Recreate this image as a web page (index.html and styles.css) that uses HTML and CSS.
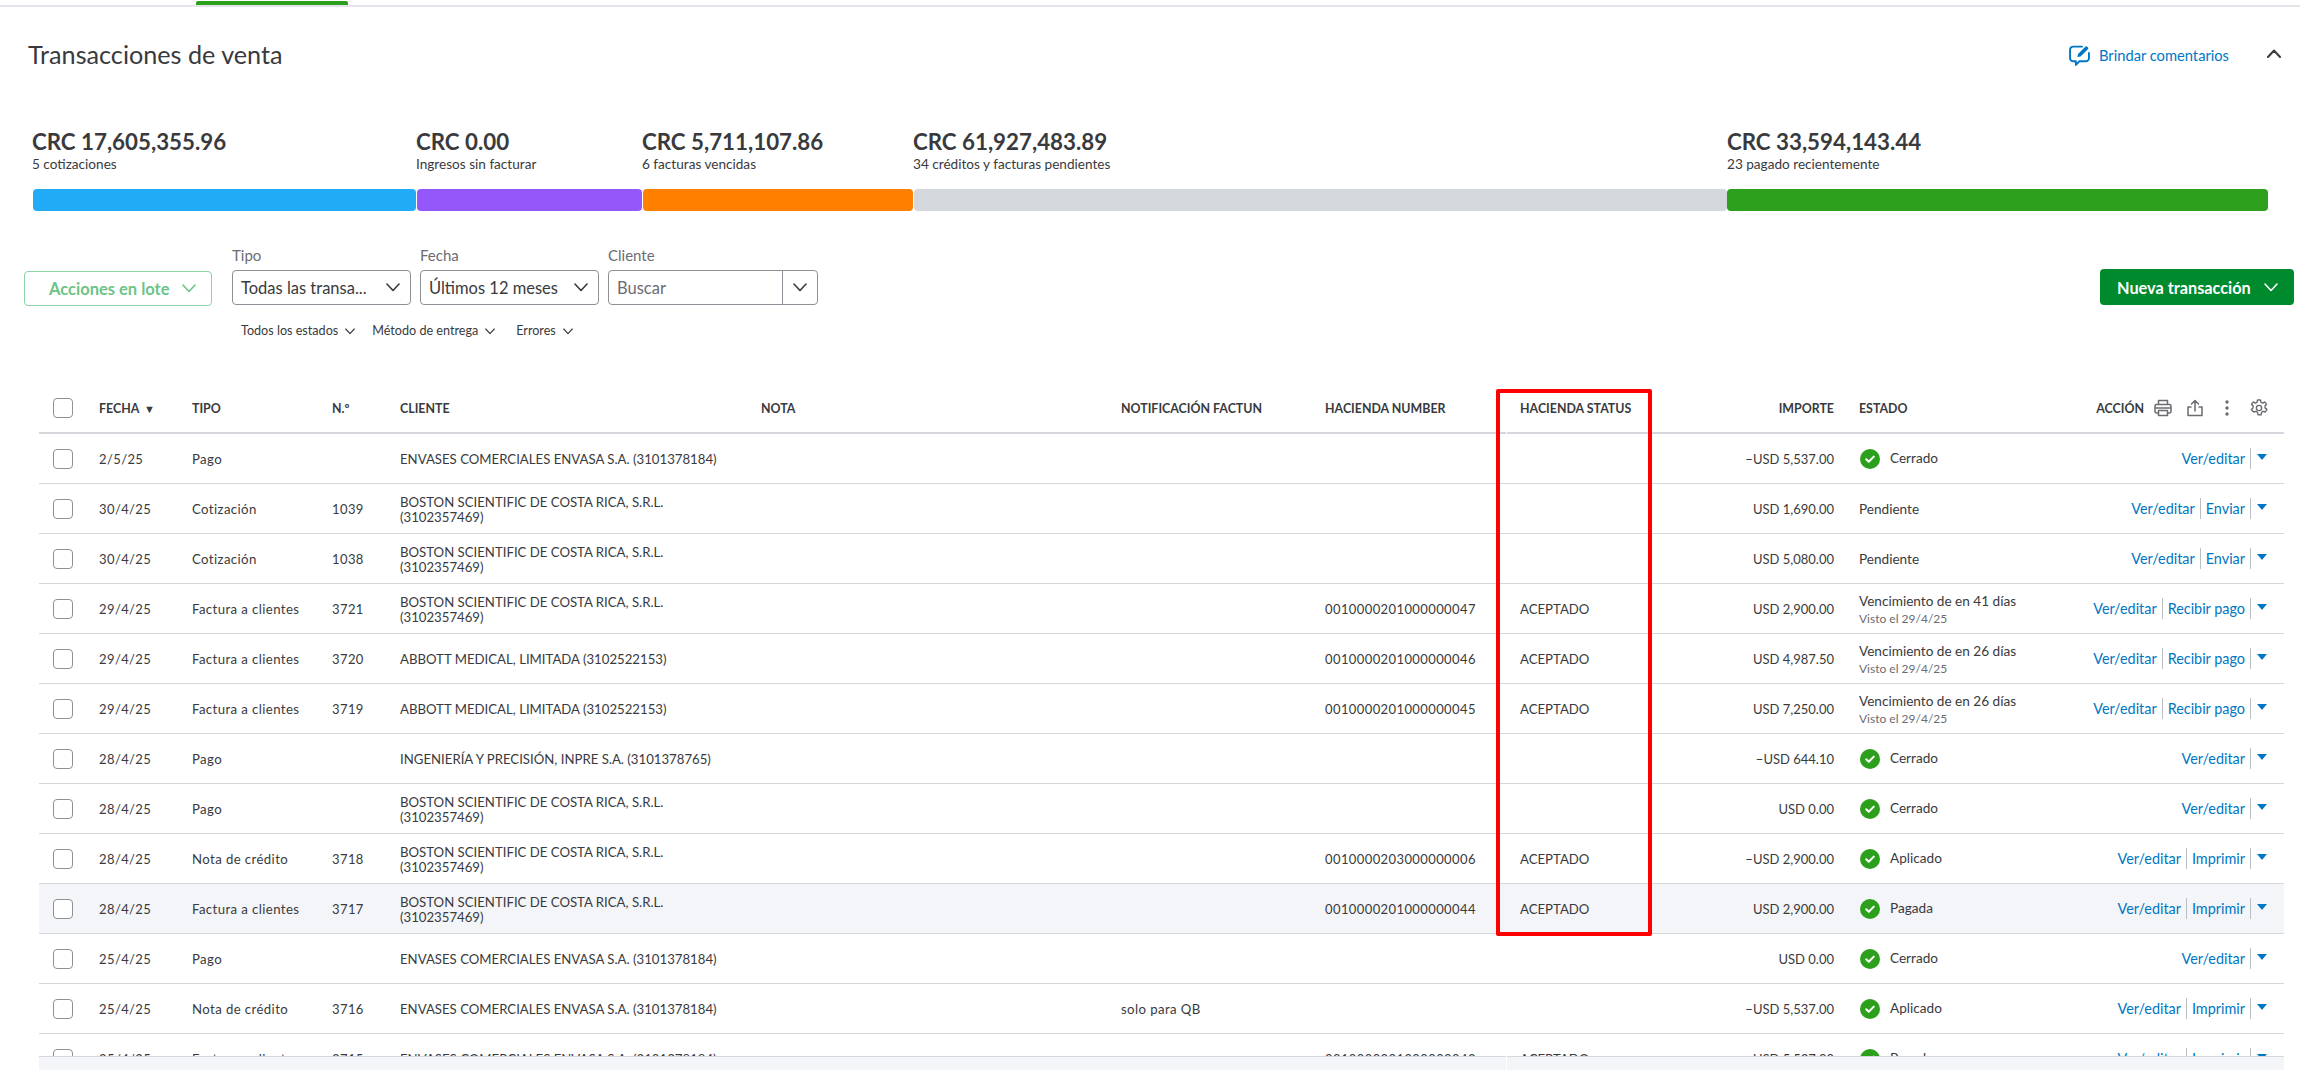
FILE: index.html
```html
<!DOCTYPE html>
<html lang="es">
<head>
<meta charset="utf-8">
<title>Transacciones de venta</title>
<link rel="stylesheet" href="styles.css">
</head>
<body>
<svg class="sprite" aria-hidden="true">
  <symbol id="ok" viewBox="0 0 20 20"><circle cx="10" cy="10" r="10" fill="#2ca01c"/><path d="M6.2 10.3l2.6 2.5 5-5.2" fill="none" stroke="#fff" stroke-width="2" stroke-linecap="round" stroke-linejoin="round"/></symbol>
  <symbol id="tri" viewBox="0 0 10 6"><path d="M0 0h10L5 6z" fill="#0077c5"/></symbol>
  <symbol id="chev" viewBox="0 0 14 9"><path d="M1 1l6 6.5L13 1" fill="none" stroke="currentColor" stroke-width="1.6" stroke-linecap="round" stroke-linejoin="round"/></symbol>
</svg>

<div class="topbar"><div class="tab"></div></div>

<header class="head">
  <h1 class="title">Transacciones de venta</h1>
  <div class="feedback">
    <svg class="fb-icon" viewBox="0 0 20 20"><path d="M12.5 1.5H4A3 3 0 0 0 1 4.5v8A3 3 0 0 0 4 15.500h2.500v3.500l3.500-3.500h6a3 3 0 0 0 3-3V7.500" fill="none" stroke="#0077c5" stroke-width="1.800" stroke-linejoin="round" stroke-linecap="round"/><path d="M8 11.500l.6-3L15.500 1.600a1.300 1.300 0 0 1 1.900 0l.6.600a1.300 1.300 0 0 1 0 1.900L11 11z" fill="#0077c5"/></svg>
    <span class="fb-text">Brindar comentarios</span>
    <svg class="collapse" viewBox="0 0 14 9"><path d="M1 8l6-6.500L13 8" fill="none" stroke="#393a3d" stroke-width="2" stroke-linecap="round" stroke-linejoin="round"/></svg>
  </div>
</header>

<section class="summary">
  <div class="seg"><div class="amount">CRC 17,605,355.96</div><div class="sub">5 cotizaciones</div><div class="bar blue"></div></div>
  <div class="seg"><div class="amount">CRC 0.00</div><div class="sub">Ingresos sin facturar</div><div class="bar purple"></div></div>
  <div class="seg"><div class="amount">CRC 5,711,107.86</div><div class="sub">6 facturas vencidas</div><div class="bar orange"></div></div>
  <div class="seg"><div class="amount">CRC 61,927,483.89</div><div class="sub">34 créditos y facturas pendientes</div><div class="bar grey"></div></div>
  <div class="seg"><div class="amount">CRC 33,594,143.44</div><div class="sub">23 pagado recientemente</div><div class="bar green"></div></div>
</section>

<section class="toolbar">
  <button class="batch">Acciones en lote <svg class="ch"><use href="#chev"/></svg></button>
  <div class="field">
    <label class="lbl">Tipo</label>
    <div class="select"><span>Todas las transa...</span><svg class="ch"><use href="#chev"/></svg></div>
  </div>
  <div class="field">
    <label class="lbl">Fecha</label>
    <div class="select"><span>Últimos 12 meses</span><svg class="ch"><use href="#chev"/></svg></div>
  </div>
  <div class="field">
    <label class="lbl">Cliente</label>
    <div class="select combo"><span class="ph">Buscar</span><span class="combo-btn"><svg class="ch"><use href="#chev"/></svg></span></div>
  </div>
  <button class="new">Nueva transacción <svg class="ch"><use href="#chev"/></svg></button>
</section>

<section class="filters">
  <span class="filter">Todos los estados <svg class="ch-s"><use href="#chev"/></svg></span>
  <span class="filter">Método de entrega <svg class="ch-s"><use href="#chev"/></svg></span>
  <span class="filter">Errores <svg class="ch-s"><use href="#chev"/></svg></span>
</section>

<section class="table">
  <div class="row th">
    <div class="c-check"><span class="cb"></span></div>
    <div>FECHA <span class="sort">▼</span></div>
    <div>TIPO</div>
    <div>N.º</div>
    <div>CLIENTE</div>
    <div>NOTA</div>
    <div>NOTIFICACIÓN FACTUN</div>
    <div>HACIENDA NUMBER</div>
    <div>HACIENDA STATUS</div>
    <div class="right">IMPORTE</div>
    <div class="c-status">ESTADO</div>
    <div class="c-act th-act">
      <span class="act-label">ACCIÓN</span>
      <svg class="th-i" viewBox="0 0 18 18"><path d="M4.500 5.500V1.500h9v4M4.500 14H2.500A1.500 1.500 0 0 1 1 12.500v-5.500A1.500 1.500 0 0 1 2.500 5.500h13A1.500 1.500 0 0 1 17 7v5.500a1.500 1.500 0 0 1-1.500 1.500h-2M4.500 11.500h9v5h-9zM1.500 9h15" fill="none" stroke="#6b6c72" stroke-width="1.500" stroke-linejoin="round"/></svg>
      <svg class="th-i" viewBox="0 0 18 18"><path d="M9 12V1.500M5.500 5L9 1.500 12.500 5M5 8H2v8.500h14V8h-3" fill="none" stroke="#6b6c72" stroke-width="1.500" stroke-linecap="round" stroke-linejoin="round"/></svg>
      <svg class="th-i" viewBox="0 0 18 18"><circle cx="9" cy="3" r="1.700" fill="#6b6c72"/><circle cx="9" cy="9" r="1.700" fill="#6b6c72"/><circle cx="9" cy="15" r="1.700" fill="#6b6c72"/></svg>
      <svg class="th-i" viewBox="0 0 18 18"><path d="M7.500 1h3l.5 2.300 1.700.8 2.100-1.200 1.800 2.400-1.600 1.700.1 1.900 1.800 1.500-1.500 2.600-2.300-.7-1.500 1.100-.5 2.400h-3l-.6-2.400-1.500-1.100-2.300.7L1.300 10.500 3 9 3.100 7 1.500 5.300l1.800-2.400 2.100 1.200 1.600-.8z" fill="none" stroke="#6b6c72" stroke-width="1.400" stroke-linejoin="round"/><circle cx="9" cy="9" r="2.600" fill="none" stroke="#6b6c72" stroke-width="1.400"/></svg>
    </div>
  </div>

  <div class="row">
    <div class="c-check"><span class="cb"></span></div><div class="num">2/5/25</div><div class="kind">Pago</div><div class="num"></div><div>ENVASES COMERCIALES ENVASA S.A. (3101378184)</div><div></div><div></div><div class="num"></div><div></div>
    <div class="right">−USD 5,537.00</div>
    <div class="c-status st"><svg class="ok"><use href="#ok"/></svg>Cerrado</div>
    <div class="c-act"><a class="lnk">Ver/editar</a><span class="sep"></span><svg class="tri"><use href="#tri"/></svg></div>
  </div>
  <div class="row">
    <div class="c-check"><span class="cb"></span></div><div class="num">30/4/25</div><div class="kind">Cotización</div><div class="num">1039</div><div class="client">BOSTON SCIENTIFIC DE COSTA RICA, S.R.L. (3102357469)</div><div></div><div></div><div class="num"></div><div></div>
    <div class="right">USD 1,690.00</div>
    <div class="c-status">Pendiente</div>
    <div class="c-act"><a class="lnk">Ver/editar</a><span class="sep"></span><a class="lnk">Enviar</a><span class="sep"></span><svg class="tri"><use href="#tri"/></svg></div>
  </div>
  <div class="row">
    <div class="c-check"><span class="cb"></span></div><div class="num">30/4/25</div><div class="kind">Cotización</div><div class="num">1038</div><div class="client">BOSTON SCIENTIFIC DE COSTA RICA, S.R.L. (3102357469)</div><div></div><div></div><div class="num"></div><div></div>
    <div class="right">USD 5,080.00</div>
    <div class="c-status">Pendiente</div>
    <div class="c-act"><a class="lnk">Ver/editar</a><span class="sep"></span><a class="lnk">Enviar</a><span class="sep"></span><svg class="tri"><use href="#tri"/></svg></div>
  </div>
  <div class="row">
    <div class="c-check"><span class="cb"></span></div><div class="num">29/4/25</div><div class="kind">Factura a clientes</div><div class="num">3721</div><div class="client">BOSTON SCIENTIFIC DE COSTA RICA, S.R.L. (3102357469)</div><div></div><div></div><div class="num">0010000201000000047</div><div>ACEPTADO</div>
    <div class="right">USD 2,900.00</div>
    <div class="c-status due"><div>Vencimiento de en 41 días</div><div class="seen">Visto el 29/4/25</div></div>
    <div class="c-act"><a class="lnk">Ver/editar</a><span class="sep"></span><a class="lnk">Recibir pago</a><span class="sep"></span><svg class="tri"><use href="#tri"/></svg></div>
  </div>
  <div class="row">
    <div class="c-check"><span class="cb"></span></div><div class="num">29/4/25</div><div class="kind">Factura a clientes</div><div class="num">3720</div><div>ABBOTT MEDICAL, LIMITADA (3102522153)</div><div></div><div></div><div class="num">0010000201000000046</div><div>ACEPTADO</div>
    <div class="right">USD 4,987.50</div>
    <div class="c-status due"><div>Vencimiento de en 26 días</div><div class="seen">Visto el 29/4/25</div></div>
    <div class="c-act"><a class="lnk">Ver/editar</a><span class="sep"></span><a class="lnk">Recibir pago</a><span class="sep"></span><svg class="tri"><use href="#tri"/></svg></div>
  </div>
  <div class="row">
    <div class="c-check"><span class="cb"></span></div><div class="num">29/4/25</div><div class="kind">Factura a clientes</div><div class="num">3719</div><div>ABBOTT MEDICAL, LIMITADA (3102522153)</div><div></div><div></div><div class="num">0010000201000000045</div><div>ACEPTADO</div>
    <div class="right">USD 7,250.00</div>
    <div class="c-status due"><div>Vencimiento de en 26 días</div><div class="seen">Visto el 29/4/25</div></div>
    <div class="c-act"><a class="lnk">Ver/editar</a><span class="sep"></span><a class="lnk">Recibir pago</a><span class="sep"></span><svg class="tri"><use href="#tri"/></svg></div>
  </div>
  <div class="row">
    <div class="c-check"><span class="cb"></span></div><div class="num">28/4/25</div><div class="kind">Pago</div><div class="num"></div><div>INGENIERÍA Y PRECISIÓN, INPRE S.A. (3101378765)</div><div></div><div></div><div class="num"></div><div></div>
    <div class="right">−USD 644.10</div>
    <div class="c-status st"><svg class="ok"><use href="#ok"/></svg>Cerrado</div>
    <div class="c-act"><a class="lnk">Ver/editar</a><span class="sep"></span><svg class="tri"><use href="#tri"/></svg></div>
  </div>
  <div class="row">
    <div class="c-check"><span class="cb"></span></div><div class="num">28/4/25</div><div class="kind">Pago</div><div class="num"></div><div class="client">BOSTON SCIENTIFIC DE COSTA RICA, S.R.L. (3102357469)</div><div></div><div></div><div class="num"></div><div></div>
    <div class="right">USD 0.00</div>
    <div class="c-status st"><svg class="ok"><use href="#ok"/></svg>Cerrado</div>
    <div class="c-act"><a class="lnk">Ver/editar</a><span class="sep"></span><svg class="tri"><use href="#tri"/></svg></div>
  </div>
  <div class="row">
    <div class="c-check"><span class="cb"></span></div><div class="num">28/4/25</div><div class="kind">Nota de crédito</div><div class="num">3718</div><div class="client">BOSTON SCIENTIFIC DE COSTA RICA, S.R.L. (3102357469)</div><div></div><div></div><div class="num">0010000203000000006</div><div>ACEPTADO</div>
    <div class="right">−USD 2,900.00</div>
    <div class="c-status st"><svg class="ok"><use href="#ok"/></svg>Aplicado</div>
    <div class="c-act"><a class="lnk">Ver/editar</a><span class="sep"></span><a class="lnk">Imprimir</a><span class="sep"></span><svg class="tri"><use href="#tri"/></svg></div>
  </div>
  <div class="row hover">
    <div class="c-check"><span class="cb"></span></div><div class="num">28/4/25</div><div class="kind">Factura a clientes</div><div class="num">3717</div><div class="client">BOSTON SCIENTIFIC DE COSTA RICA, S.R.L. (3102357469)</div><div></div><div></div><div class="num">0010000201000000044</div><div>ACEPTADO</div>
    <div class="right">USD 2,900.00</div>
    <div class="c-status st"><svg class="ok"><use href="#ok"/></svg>Pagada</div>
    <div class="c-act"><a class="lnk">Ver/editar</a><span class="sep"></span><a class="lnk">Imprimir</a><span class="sep"></span><svg class="tri"><use href="#tri"/></svg></div>
  </div>
  <div class="row">
    <div class="c-check"><span class="cb"></span></div><div class="num">25/4/25</div><div class="kind">Pago</div><div class="num"></div><div>ENVASES COMERCIALES ENVASA S.A. (3101378184)</div><div></div><div></div><div class="num"></div><div></div>
    <div class="right">USD 0.00</div>
    <div class="c-status st"><svg class="ok"><use href="#ok"/></svg>Cerrado</div>
    <div class="c-act"><a class="lnk">Ver/editar</a><span class="sep"></span><svg class="tri"><use href="#tri"/></svg></div>
  </div>
  <div class="row">
    <div class="c-check"><span class="cb"></span></div><div class="num">25/4/25</div><div class="kind">Nota de crédito</div><div class="num">3716</div><div>ENVASES COMERCIALES ENVASA S.A. (3101378184)</div><div></div><div class="kind">solo para QB</div><div class="num"></div><div></div>
    <div class="right">−USD 5,537.00</div>
    <div class="c-status st"><svg class="ok"><use href="#ok"/></svg>Aplicado</div>
    <div class="c-act"><a class="lnk">Ver/editar</a><span class="sep"></span><a class="lnk">Imprimir</a><span class="sep"></span><svg class="tri"><use href="#tri"/></svg></div>
  </div>
  <div class="row">
    <div class="c-check"><span class="cb"></span></div><div class="num">25/4/25</div><div class="kind">Factura a clientes</div><div class="num">3715</div><div>ENVASES COMERCIALES ENVASA S.A. (3101378184)</div><div></div><div></div><div class="num">0010000201000000043</div><div>ACEPTADO</div>
    <div class="right">USD 5,537.00</div>
    <div class="c-status st"><svg class="ok"><use href="#ok"/></svg>Pagada</div>
    <div class="c-act"><a class="lnk">Ver/editar</a><span class="sep"></span><a class="lnk">Imprimir</a><span class="sep"></span><svg class="tri"><use href="#tri"/></svg></div>
  </div>
</section>
<div class="tfoot"></div>

<div class="highlight"></div>
</body>
</html>
```
FILE: styles.css
```css
* { box-sizing: border-box; }
html, body { margin: 0; padding: 0; }
body {
  position: relative;
  width: 2300px;
  height: 1071px;
  overflow: hidden;
  background: #fff;
  color: #393a3d;
  font-family: "Lato", "Open Sans", sans-serif;
  font-size: 13.200px;
}
.sprite { display: none; }

.topbar { height: 7px; border-bottom: 2px solid #e3e5ea; padding-left: 196px; padding-top: 1px; }
.tab { width: 152px; height: 4px; background: #2ca01c; border-radius: 2px 2px 0 0; }

.head { display: flex; justify-content: space-between; align-items: center; height: 32px; margin-top: 32px; padding: 0 19px 0 28px; }
.title { margin: 0 0 2px; font-size: 25.200px; font-weight: 400; color: #393a3d; }
.feedback { display: flex; align-items: center; color: #0077c5; font-size: 14.700px; }
.fb-icon { width: 21px; height: 21px; margin-right: 9px; }
.fb-text { width: 168px; }
.collapse { width: 14px; height: 9px; margin-bottom: 3px; }

.summary { display: grid; grid-template-columns: 384px 226px 271px 814px 541px; margin-top: 59px; padding-left: 32px; }
.seg { min-width: 0; }
.amount { font-size: 22.300px; font-weight: 700; line-height: 24px; color: #393a3d; white-space: nowrap; }
.sub { font-size: 13.600px; line-height: 16px; margin-top: 2px; white-space: nowrap; }
.bar { height: 22px; margin: 17px 0 0 1px; border-radius: 4px; }
.blue { background: #21abf6; }
.purple { background: #9457fa; }
.orange { background: #ff8000; }
.grey { background: #d4d7dc; }
.green { background: #2ca01c; margin-left: 0; }

.toolbar { display: flex; align-items: flex-end; margin-top: 36px; padding: 0 6px 0 24px; }
.batch { width: 188px; height: 35px; margin-right: 20px; margin-bottom: -1px; padding: 0 0 0 24px; border: 1px solid #8ed1a3; border-radius: 4px; background: #fff; color: #6cc488; font: 700 16.500px "Lato", sans-serif; display: flex; align-items: center; gap: 13px; }
.field { margin-right: 9px; }
.lbl { display: block; height: 16px; margin-bottom: 7px; font-size: 15px; line-height: 16px; color: #6b6c72; }
.select { width: 179px; height: 35px; border: 1px solid #8d9096; border-radius: 4px; display: flex; align-items: center; justify-content: space-between; padding: 0 10px 0 8px; font-size: 16.500px; color: #393a3d; white-space: nowrap; }
.combo { width: 210px; padding: 0 0 0 8px; }
.ph { color: #6b6c72; font-size: 16.500px; }
.combo-btn { width: 35px; height: 100%; border-left: 1px solid #8d9096; display: flex; align-items: center; justify-content: center; }
.ch { width: 14px; height: 9px; color: #393a3d; flex: none; }
.batch .ch { color: #6cc488; }
.new { margin-left: auto; width: 194px; height: 36px; padding: 0 0 0 17px; border: 0; border-radius: 4px; background: #008a2e; color: #fff; font: 700 16.300px "Lato", sans-serif; display: flex; align-items: center; gap: 13px; }
.new .ch { color: #fff; }

.filters { display: flex; gap: 17px; margin: 18px 0 0 241px; height: 16px; font-size: 12.600px; line-height: 16px; }
.filter { display: flex; align-items: center; gap: 7px; }
.filter:last-child { margin-left: 4px; }
.ch-s { width: 10px; height: 7px; color: #393a3d; }

.table { margin: 45px 16px 0 39px; height: 672px; overflow: hidden; }
.row {
  display: grid;
  grid-template-columns: 60px 93px 140px 68px 361px 360px 204px 195px 140px 174px 220px 1fr;
  align-items: center;
  height: 50px;
  border-bottom: 1px solid #d4d7dc;
  line-height: 15px;
}
.row:not(.th) > div:not(.c-check):not(.st):not(.c-act) { padding-top: 2px; }
.hover { background: #f4f5f8; }
.th { position: relative; height: 50px; border-bottom: 2px solid #d4d7dc; font-weight: 700; font-size: 12.400px; }
.th::after { content: ""; position: absolute; left: 1467px; bottom: -2px; width: 1px; height: 2px; background: #fff; }
.sort { font-size: 11px; margin-left: 2px; }
.kind { letter-spacing: 0.4px; }
.num { letter-spacing: 0.4px; font-size: 13px; }
.c-check { padding-left: 14px; display: flex; }
.cb { display: block; width: 20px; height: 20px; border: 1px solid #8d9096; border-radius: 4px; background: #fff; }
.client { max-width: 300px; }
.right { text-align: right; font-size: 13px; }
.c-status { padding-left: 25px; white-space: nowrap; font-size: 13.600px; }
.th .c-status { font-size: 12.400px; }
.th .right { font-size: 12.400px; }
.st { display: flex; align-items: center; }
.ok { width: 20px; height: 20px; margin: 0 10px 0 1px; flex: none; }
.due { line-height: 17px; }
.seen { font-size: 12px; color: #6b6c72; }
.c-act { display: flex; align-items: center; justify-content: flex-end; grid-column: 12; padding-right: 17px; white-space: nowrap; }
.lnk { color: #0077c5; font-size: 14.400px; }
.sep { width: 1px; height: 21px; background: #babec5; margin: 0 5px; }
.tri { width: 10px; height: 6px; margin-bottom: 3px; margin-left: 1px; }
.th-act { padding-right: 16px; }
.act-label { margin-right: 10px; }
.th-i { width: 18px; height: 18px; margin-right: 14px; }
.th-i:last-child { margin-right: 0; }

.tfoot { position: relative; margin: 0 16px 0 39px; height: 14px; border-top: 1px solid #d4d7dc; background: #f4f5f8; }
.tfoot::after { content: ""; position: absolute; left: 1467px; top: -1px; bottom: 0; width: 1px; background: #fff; }

.highlight { position: absolute; left: 1496px; top: 389px; width: 156px; height: 547px; border: 4px solid #ff0000; border-radius: 2px; pointer-events: none; }
```
